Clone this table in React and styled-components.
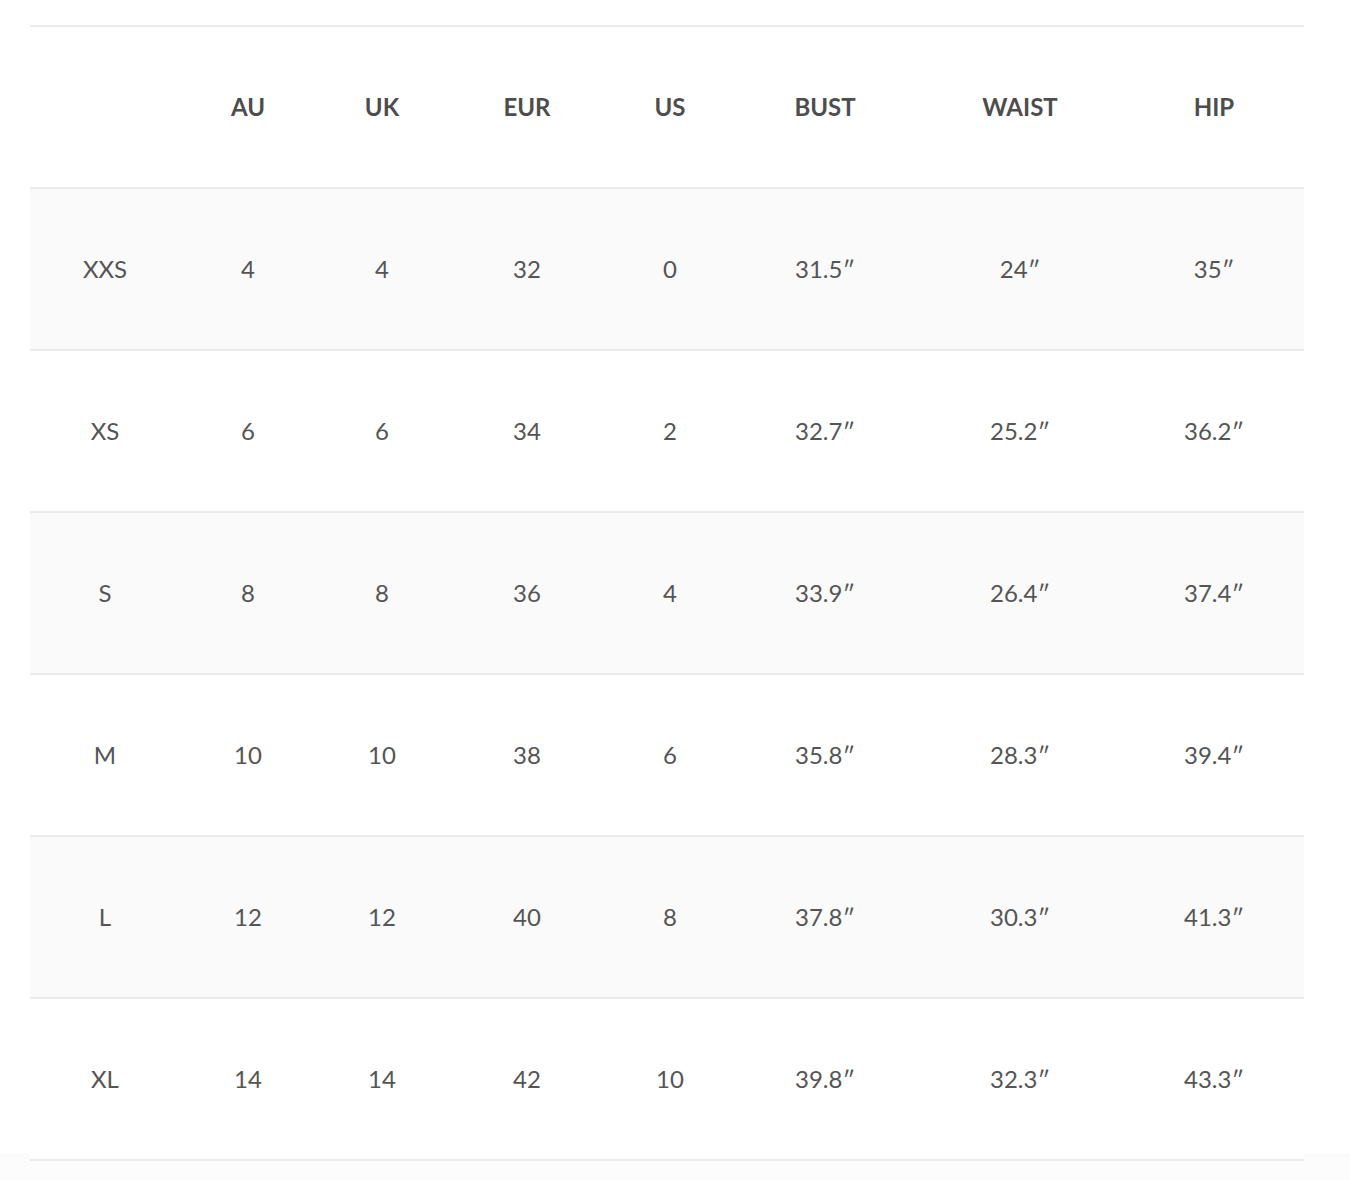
import React from 'react';
import styled, { createGlobalStyle } from 'styled-components';

const GlobalStyle = createGlobalStyle`
  body {
    margin: 0;
    background: #fff;
    font-family: Lato, "Open Sans", sans-serif;
  }
`;

// faint grey band under the table, as if the next section starts there
const Page = styled.div`
  min-height: 100vh;
  box-sizing: border-box;
  padding: 25px 46px 0 30px;
  background: linear-gradient(to bottom, #fff 0, #fff 1153px, #fcfcfc 1153px);
`;

const SizeTable = styled.table`
  width: 1274px;
  table-layout: fixed;
  border-collapse: collapse;
  border-top: 2px solid #ebebeb;
`;

const Row = styled.tr`
  height: 162px;
  border-bottom: 2px solid #ebebeb;
  background: ${(p) => (p.$shaded ? '#fafafa' : '#fff')};
`;

const HeadCell = styled.th`
  padding: 0 0 2px;
  text-align: center;
  font-size: 24px;
  font-weight: 700;
  color: #4d4d4d;
  text-transform: uppercase;
`;

const Cell = styled.td`
  padding: 0 0 2px;
  text-align: center;
  font-size: 24px;
  font-weight: 400;
  color: #555;
`;

const widths = [150, 136, 132, 158, 128, 182, 208, 180];
const headers = ['', 'AU', 'UK', 'EUR', 'US', 'Bust', 'Waist', 'Hip'];

const sizes = [
  ['XXS', '4', '4', '32', '0', '31.5″', '24″', '35″'],
  ['XS', '6', '6', '34', '2', '32.7″', '25.2″', '36.2″'],
  ['S', '8', '8', '36', '4', '33.9″', '26.4″', '37.4″'],
  ['M', '10', '10', '38', '6', '35.8″', '28.3″', '39.4″'],
  ['L', '12', '12', '40', '8', '37.8″', '30.3″', '41.3″'],
  ['XL', '14', '14', '42', '10', '39.8″', '32.3″', '43.3″'],
];

export default function App() {
  return (
    <Page>
      <GlobalStyle />
      <SizeTable>
        <colgroup>
          {widths.map((w, i) => <col key={i} style={{ width: w }} />)}
        </colgroup>
        <thead>
          <Row>
            {headers.map((h, i) => <HeadCell key={i}>{h}</HeadCell>)}
          </Row>
        </thead>
        <tbody>
          {sizes.map((row, i) => (
            <Row key={row[0]} $shaded={i % 2 === 0}>
              {row.map((v, j) => <Cell key={j}>{v}</Cell>)}
            </Row>
          ))}
        </tbody>
      </SizeTable>
    </Page>
  );
}
